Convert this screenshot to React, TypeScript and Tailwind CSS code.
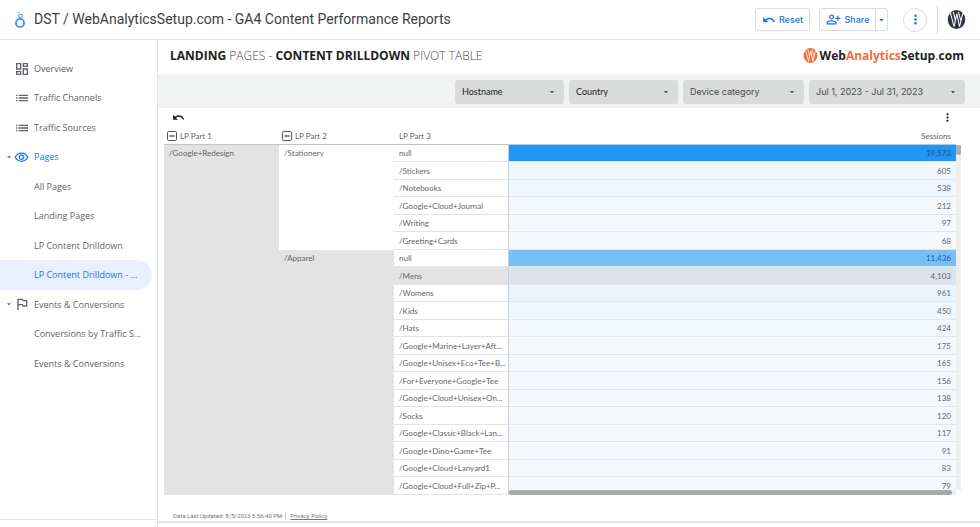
import type { ReactNode } from "react";
import { clsx } from "clsx";
import {
  MdArrowDropDown,
  MdList,
  MdMoreVert,
  MdOutlineDashboard,
  MdOutlinedFlag,
  MdOutlinePersonAddAlt,
  MdOutlineVisibility,
  MdUndo,
} from "react-icons/md";

type NavItem = {
  label: string;
  icon?: ReactNode;
  expanded?: boolean;
  highlight?: boolean;
  active?: boolean;
};

const NAV: NavItem[] = [
  { label: "Overview", icon: <MdOutlineDashboard size={16} /> },
  { label: "Traffic Channels", icon: <MdList size={16} /> },
  { label: "Traffic Sources", icon: <MdList size={16} /> },
  { label: "Pages", icon: <MdOutlineVisibility size={15} />, expanded: true, highlight: true },
  { label: "All Pages" },
  { label: "Landing Pages" },
  { label: "LP Content Drilldown" },
  { label: "LP Content Drilldown - ...", highlight: true, active: true },
  { label: "Events & Conversions", icon: <MdOutlinedFlag size={16} />, expanded: true },
  { label: "Conversions by Traffic S..." },
  { label: "Events & Conversions" },
];

type Row = { name: string; sessions: string; heat: string; hovered?: boolean };

const STATIONERY: Row[] = [
  { name: "null", sessions: "19,573", heat: "bg-[#2196f3] text-[#1d4f96]" },
  { name: "/Stickers", sessions: "605", heat: "bg-[#eef6fe]" },
  { name: "/Notebooks", sessions: "538", heat: "bg-[#eef6fe]" },
  { name: "/Google+Cloud+Journal", sessions: "212", heat: "bg-[#f3f8fe]" },
  { name: "/Writing", sessions: "97", heat: "bg-[#f5f9fe]" },
  { name: "/Greeting+Cards", sessions: "68", heat: "bg-[#f5f9fe]" },
];

const APPAREL: Row[] = [
  { name: "null", sessions: "11,436", heat: "bg-[#79bef7] text-[#1c56b8]" },
  { name: "/Mens", sessions: "4,103", heat: "bg-[#dce3ea]", hovered: true },
  { name: "/Womens", sessions: "961", heat: "bg-[#ebf5fe]" },
  { name: "/Kids", sessions: "450", heat: "bg-[#eef6fe]" },
  { name: "/Hats", sessions: "424", heat: "bg-[#f2f7fe]" },
  { name: "/Google+Marine+Layer+Aft...", sessions: "175", heat: "bg-[#f4f8fe]" },
  { name: "/Google+Unisex+Eco+Tee+B...", sessions: "165", heat: "bg-[#f4f8fe]" },
  { name: "/For+Everyone+Google+Tee", sessions: "156", heat: "bg-[#f4f8fe]" },
  { name: "/Google+Cloud+Unisex+On...", sessions: "138", heat: "bg-[#f4f8fe]" },
  { name: "/Socks", sessions: "120", heat: "bg-[#f4f8fe]" },
  { name: "/Google+Classic+Black+Lan...", sessions: "117", heat: "bg-[#f4f8fe]" },
  { name: "/Google+Dino+Game+Tee", sessions: "91", heat: "bg-[#f5f9fe]" },
  { name: "/Google+Cloud+Lanyard1", sessions: "83", heat: "bg-[#f5f9fe]" },
  { name: "/Google+Cloud+Full+Zip+P...", sessions: "79", heat: "bg-[#f5f9fe]" },
];

function LookerLogo() {
  return (
    <svg viewBox="0 0 12 18" className="h-[18px] w-3 shrink-0" fill="none" aria-hidden="true">
      <circle cx="6" cy="12" r="4.1" stroke="#4094f7" strokeWidth="1.9" />
      <circle cx="6.6" cy="5" r="1.8" stroke="#4a9af8" strokeWidth="1.1" />
      <circle cx="5" cy="1.6" r="0.8" fill="#8bbffa" />
    </svg>
  );
}

function WMark({ fill, className }: { fill: string; className: string }) {
  return (
    <svg viewBox="0 0 20 20" className={className} aria-hidden="true">
      <ellipse cx="10" cy="10" rx="9.2" ry="10" fill={fill} />
      <path
        d="M3.6 3 7.4 17.6 10.4 4 13.2 17.6 16.8 3M6.6 2 8.8 10.6M12 2 14.6 11.4"
        fill="none"
        stroke="#fff"
        strokeWidth="1.1"
      />
    </svg>
  );
}

function Filter({ label, className }: { label: string; className: string }) {
  return (
    <div className={clsx("relative h-6 rounded-[3px] bg-[#d9dada]", className)}>
      <select
        aria-label={label}
        className="h-full w-full cursor-pointer appearance-none bg-transparent pt-px pr-6 pl-[7px] outline-none"
      >
        <option>{label}</option>
      </select>
      <MdArrowDropDown size={10} className="pointer-events-none absolute top-[7px] right-[7px] text-[#333]" />
    </div>
  );
}

function Collapse({ label }: { label: string }) {
  return (
    <button type="button" className="flex items-center gap-[3px]">
      <svg viewBox="0 0 10 10" className="size-[10px]" fill="none" stroke="#555" aria-hidden="true">
        <rect x="0.5" y="0.5" width="9" height="9" rx="1" />
        <path d="M2.5 5h5" strokeWidth="1.4" />
      </svg>
      {label}
    </button>
  );
}

function PivotRows({ group, rows, lead }: { group: string; rows: Row[]; lead?: ReactNode }) {
  return rows.map((row, i) => (
    <tr key={row.name} className="odd:h-[17px] even:h-[18px]">
      {i === 0 && lead}
      {i === 0 && (
        <td rowSpan={rows.length} className={clsx("px-[5px] pt-[2px] align-top", !lead && "bg-[#e3e3e3]")}>
          {group}
        </td>
      )}
      <td
        className={clsx(
          "border-r border-b border-r-[#ccc] border-b-[#e3e3e3] pl-[5px] whitespace-nowrap",
          row.hovered ? "bg-[#e3e3e3]" : "bg-white",
        )}
      >
        {row.name}
      </td>
      <td className={clsx("border-b border-b-[#e1e7ee] pr-[5px] text-right", row.heat)}>{row.sessions}</td>
    </tr>
  ));
}

export default function App() {
  return (
    <div className="flex min-h-screen flex-col bg-white font-['Open_Sans',sans-serif] text-[#5f6368]">
      <header className="flex h-10 shrink-0 items-center border-b border-[#e3e5e8] pr-[14px] pl-[14px]">
        <LookerLogo />
        <h1 className="ml-2 flex-1 truncate font-[Roboto,sans-serif] text-[14px] text-[#3c4043]">
          DST / WebAnalyticsSetup.com - GA4 Content Performance Reports
        </h1>
        <div className="flex items-center font-[Inter,sans-serif] text-[9px] font-medium text-[#1a73e8]">
          <button type="button" className="flex h-[23px] w-[55px] items-center justify-center gap-[3px] rounded-[3px] border border-[#dadce0]">
            <MdUndo size={14} />
            Reset
          </button>
          <div className="ml-[9px] flex h-[23px] rounded-[3px] border border-[#dadce0]">
            <button type="button" className="flex w-[55px] items-center justify-center gap-1">
              <MdOutlinePersonAddAlt size={15} />
              Share
            </button>
            <button type="button" aria-label="Share options" className="flex w-3 items-center justify-center border-l border-[#dadce0]">
              <MdArrowDropDown size={12} />
            </button>
          </div>
          <button type="button" aria-label="More options" className="ml-[15px] flex size-6 items-center justify-center rounded-full border border-[#dadce0]">
            <MdMoreVert size={15} />
          </button>
          <div className="ml-[10px] h-7 border-l border-[#dadce0]" />
          <button type="button" aria-label="Account" className="ml-[9px]">
            <WMark fill="#2b3442" className="size-[19px]" />
          </button>
        </div>
      </header>

      <div className="flex flex-1">
        <nav className="flex w-[158px] shrink-0 flex-col border-r border-[#e3e5e8]">
          <ul className="mt-[14px] flex h-[324px] flex-col text-[9px] font-medium">
            {NAV.map((item, i) => (
              <li key={i} className="flex flex-1">
                <a
                  href="#"
                  className={clsx(
                    "mr-[5px] flex w-full items-center rounded-r-full whitespace-nowrap",
                    item.highlight && "text-[#1a73e8]",
                    item.active && "bg-[#e8f0fe]",
                  )}
                >
                  <span className="flex w-[34px] shrink-0 items-center pl-1">
                    <span className="flex w-[10px] justify-center text-[#5f6368]">
                      {item.expanded && <MdArrowDropDown size={10} />}
                    </span>
                    {item.icon}
                  </span>
                  {item.label}
                </a>
              </li>
            ))}
          </ul>
          <div className="mt-auto h-2 border-t border-[#e3e5e8]" />
        </nav>

        <main className="flex min-w-0 flex-1 flex-col">
          <div className="flex h-[34px] items-center justify-between pr-4 pb-[3px] pl-3">
            <h2 className="text-[12px] font-light text-[#4a4a4a]">
              <span className="font-bold text-[#212121]">LANDING</span> PAGES -{" "}
              <span className="font-bold text-[#212121]">CONTENT DRILLDOWN</span> PIVOT TABLE
            </h2>
            <a href="#" className="flex items-center gap-[2px] text-[12px] leading-4 font-bold text-[#222]">
              <WMark fill="#f26b3a" className="size-[15px]" />
              <span>
                Web<span className="text-[#f26b3a]">Analytics</span>Setup<span className="text-[#f26b3a]">.</span>com
              </span>
            </a>
          </div>

          <div className="flex h-[34px] items-center justify-end gap-[5px] bg-[#f1f3f3] pt-px pr-[15px] text-[9px] text-[#4a4a4a]">
            <Filter label="Hostname" className="w-[109px] font-[Lato,sans-serif] text-[#222]" />
            <Filter label="Country" className="w-[109px] font-[Lato,sans-serif] text-[#222]" />
            <Filter label="Device category" className="w-[121px] font-[Inter,sans-serif]" />
            <Filter label="Jul 1, 2023 - Jul 31, 2023" className="w-[156px] font-[Inter,sans-serif]" />
          </div>

          <section className="pr-[19px] pl-[6px] font-[Lato,sans-serif] text-[8px] leading-3 text-[#666]">
            <div className="flex h-[19px] items-center justify-between pr-[7px] pl-2 text-[#222]">
              <button type="button" aria-label="Undo">
                <MdUndo size={13} />
              </button>
              <button type="button" aria-label="Chart options">
                <MdMoreVert size={13} />
              </button>
            </div>
            <div className="relative pr-[5px]">
              <table className="w-full table-fixed border-separate border-spacing-0">
                <thead>
                  <tr className="h-[18px] text-left [&>th]:border-b [&>th]:border-[#c4c4c4] [&>th]:font-normal">
                    <th className="w-[115px] pl-[3px]">
                      <Collapse label="LP Part 1" />
                    </th>
                    <th className="w-[115px] pl-[3px]">
                      <Collapse label="LP Part 2" />
                    </th>
                    <th className="w-[115px] pl-[5px]">LP Part 3</th>
                    <th className="pr-[5px] text-right">Sessions</th>
                  </tr>
                </thead>
                <tbody>
                  <PivotRows
                    group="/Stationery"
                    rows={STATIONERY}
                    lead={
                      <td rowSpan={STATIONERY.length + APPAREL.length} className="bg-[#e3e3e3] px-[5px] pt-[2px] align-top">
                        /Google+Redesign
                      </td>
                    }
                  />
                  <PivotRows group="/Apparel" rows={APPAREL} />
                </tbody>
              </table>
              {/* scrollbars over the table body */}
              <div className="absolute top-[18px] right-0 bottom-[5px] w-[5px] bg-[#eee]">
                <div className="h-[10px] rounded-b-sm bg-[#adadad]" />
              </div>
              <div className="absolute right-[5px] bottom-0 left-[345px] h-[5px] bg-[#eee] pr-1">
                <div className="h-full rounded-full bg-[#a8a8a8]" />
              </div>
            </div>
          </section>

          <footer className="mt-auto mb-[4px] flex items-center gap-1 border-b-2 border-[#e3e3e3] pb-[1px] pl-[15px] font-[Roboto,sans-serif] text-[6px] leading-2 text-[#777]">
            <span className="border-r border-[#ccc] pr-[3px]">Data Last Updated: 8/5/2023 5:56:40 PM</span>
            <a href="#" className="underline">
              Privacy Policy
            </a>
          </footer>
        </main>
      </div>
    </div>
  );
}
